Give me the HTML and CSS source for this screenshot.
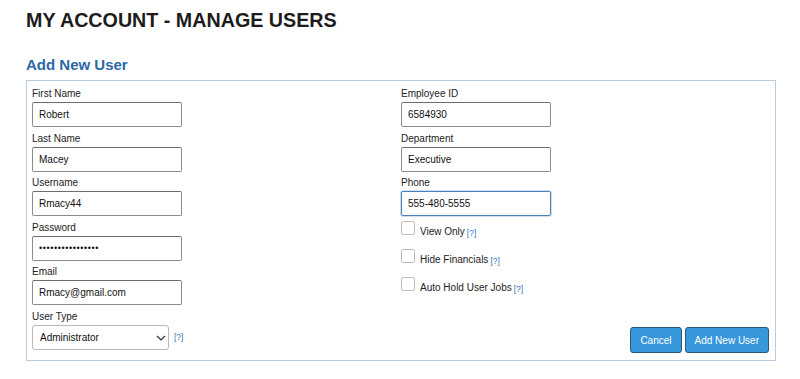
FILE: index.html
```html
<!DOCTYPE html>
<html lang="en">
<head>
  <meta charset="UTF-8" />
  <title>My Account - Manage Users</title>
  <link rel="stylesheet" href="styles.css">
</head>
<body>

<div class="page">
  <h1>MY ACCOUNT - MANAGE USERS</h1>
  <h2>Add New User</h2>

  <form class="user-form" onsubmit="return false">
    <div class="col">
      <label class="field">
        <span class="label">First Name</span>
        <input type="text" value="Robert" />
      </label>
      <label class="field">
        <span class="label">Last Name</span>
        <input type="text" value="Macey" />
      </label>
      <label class="field">
        <span class="label">Username</span>
        <input type="text" value="Rmacy44" />
      </label>
      <label class="field">
        <span class="label">Password</span>
        <input type="password" value="robertmacey12345" />
      </label>
      <label class="field">
        <span class="label">Email</span>
        <input type="text" value="Rmacy@gmail.com" />
      </label>
      <div class="field">
        <span class="label">User Type</span>
        <div class="select-row">
          <div class="select-wrap">
            <select>
              <option>Administrator</option>
              <option>Standard</option>
            </select>
            <svg class="chevron" width="10" height="6" viewBox="0 0 10 6"><path d="M1 1l4 4 4-4" fill="none" stroke="#333" stroke-width="1.2"/></svg>
          </div>
          <a class="help" href="#">[?]</a>
        </div>
      </div>
    </div>

    <div class="col right">
      <label class="field">
        <span class="label">Employee ID</span>
        <input type="text" value="6584930" />
      </label>
      <label class="field">
        <span class="label">Department</span>
        <input type="text" value="Executive" />
      </label>
      <label class="field">
        <span class="label">Phone</span>
        <input type="text" class="focused" value="555-480-5555" />
      </label>

      <label class="check"><input type="checkbox" /> <span>View Only</span> <a class="help" href="#">[?]</a></label>
      <label class="check"><input type="checkbox" /> <span>Hide Financials</span> <a class="help" href="#">[?]</a></label>
      <label class="check"><input type="checkbox" /> <span>Auto Hold User Jobs</span> <a class="help" href="#">[?]</a></label>

      <div class="actions">
        <button type="button">Cancel</button>
        <button type="submit">Add New User</button>
      </div>
    </div>
  </form>
</div>

</body>
</html>
```

FILE: styles.css
```css
body {
  margin: 0;
  font-family: "Liberation Sans", Arial, sans-serif;
  background: #fff;
  color: #222;
}

.page {
  padding: 8px 24px 0 26px;
}

h1 {
  font-size: 19.7px;
  font-weight: bold;
  color: #1c1c1c;
  margin: 0;
  line-height: 24px;
}

h2 {
  font-size: 15px;
  font-weight: bold;
  color: #2b68a6;
  margin: 24px 0 6px;
  line-height: 18px;
}

.user-form {
  display: grid;
  grid-template-columns: 369px 1fr;
  width: 737px;
  border: 1px solid #b8cbe0;
  padding: 5px 6px 7px 5px;
}

.col {
  display: flex;
  flex-direction: column;
}

.field {
  display: block;
  margin-bottom: 3.5px;
}

.label {
  display: block;
  font-size: 10px;
  line-height: 16px;
  color: #222;
}

input[type="text"],
input[type="password"] {
  box-sizing: border-box;
  width: 150px;
  height: 25px;
  margin: 0;
  padding: 0 6px;
  border: 1px solid #8c8c8c;
  border-top-color: #6e6e6e;
  border-radius: 2px;
  font-family: "Liberation Sans", Arial, sans-serif;
  font-size: 10px;
  color: #111;
  outline: none;
}

input[type="password"] {
  letter-spacing: 0.6px;
  font-size: 9px;
}

input.focused {
  border-color: #4b7fbd;
  box-shadow: 0 0 0 1px rgba(75, 127, 189, 0.25);
}

.select-row {
  display: flex;
  align-items: center;
  gap: 5px;
}

.select-wrap {
  position: relative;
  width: 137px;
  height: 25px;
}

select {
  -webkit-appearance: none;
  appearance: none;
  box-sizing: border-box;
  width: 100%;
  height: 25px;
  margin: 0;
  padding: 0 7px;
  border: 1px solid #b9b9b9;
  border-radius: 3px;
  background: #fff;
  font-family: "Liberation Sans", Arial, sans-serif;
  font-size: 10px;
  color: #111;
}

.chevron {
  position: absolute;
  right: 3px;
  top: 10px;
  pointer-events: none;
}

.help {
  font-size: 8.5px;
  color: #3574c0;
  text-decoration: none;
}

.check {
  display: flex;
  align-items: center;
  height: 14px;
  margin: 1px 0 13px;
  font-size: 10px;
  color: #222;
}

.check input {
  -webkit-appearance: none;
  appearance: none;
  box-sizing: border-box;
  width: 14px;
  height: 14px;
  margin: 0 5px 0 0;
  border: 1px solid #bdbdbd;
  border-radius: 2px;
  background: #fff;
}

.check span {
  position: relative;
  top: 4px;
  margin-right: 2px;
}

.check .help {
  position: relative;
  top: 5px;
}

.actions {
  display: flex;
  justify-content: flex-end;
  gap: 3px;
  margin-top: auto;
}

button {
  height: 26px;
  padding: 0 9px;
  border: 1px solid #2d5877;
  border-radius: 3px;
  background: #3797db;
  color: #fff;
  font-family: "Liberation Sans", Arial, sans-serif;
  font-size: 10px;
  cursor: pointer;
}

button:hover {
  background: #2a85c6;
}
```
